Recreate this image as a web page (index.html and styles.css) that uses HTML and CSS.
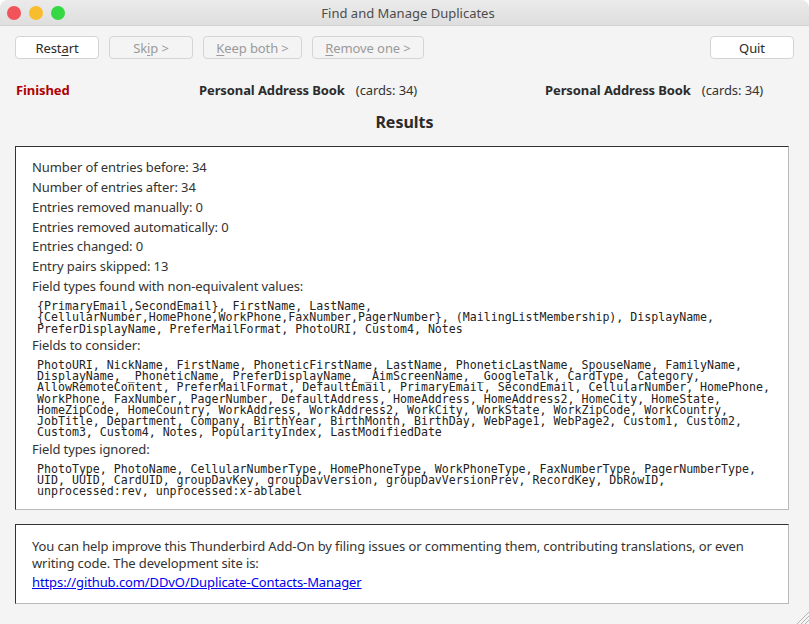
FILE: index.html
```html
<!DOCTYPE html>
<html>
<head>
<meta charset="utf-8">
<title>Find and Manage Duplicates</title>
<link rel="stylesheet" href="styles.css">
</head>
<body>
<div class="window">
  <div class="titlebar">
    <div class="lights">
      <span class="light red"></span>
      <span class="light yellow"></span>
      <span class="light green"></span>
    </div>
    <div class="title">Find and Manage Duplicates</div>
  </div>
  <div class="toolbar">
    <div class="btn-group">
      <button class="btn w-restart">Rest<u>a</u>rt</button>
      <button class="btn disabled w-skip">Sk<u>i</u>p &gt;</button>
      <button class="btn disabled w-keep"><u>K</u>eep both &gt;</button>
      <button class="btn disabled w-remove"><u>R</u>emove one &gt;</button>
    </div>
    <button class="btn w-quit">Quit</button>
  </div>
  <div class="status-row">
    <div class="status">Finished</div>
    <div class="book"><b>Personal Address Book</b><span class="cards">(cards: 34)</span></div>
    <div class="book"><b>Personal Address Book</b><span class="cards">(cards: 34)</span></div>
  </div>
  <h1 class="heading">Results</h1>
  <div class="panel results">
    <div class="line">Number of entries before: 34</div>
    <div class="line">Number of entries after: 34</div>
    <div class="line">Entries removed manually: 0</div>
    <div class="line">Entries removed automatically: 0</div>
    <div class="line">Entries changed: 0</div>
    <div class="line">Entry pairs skipped: 13</div>
    <div class="line">Field types found with non-equivalent values:</div>
    <div class="mono">{PrimaryEmail,SecondEmail}, FirstName, LastName,
{CellularNumber,HomePhone,WorkPhone,FaxNumber,PagerNumber}, (MailingListMembership), DisplayName,
PreferDisplayName, PreferMailFormat, PhotoURI, Custom4, Notes</div>
    <div class="line">Fields to consider:</div>
    <div class="mono">PhotoURI, NickName, FirstName, PhoneticFirstName, LastName, PhoneticLastName, SpouseName, FamilyName,
DisplayName, _PhoneticName, PreferDisplayName, _AimScreenName, _GoogleTalk, CardType, Category,
AllowRemoteContent, PreferMailFormat, DefaultEmail, PrimaryEmail, SecondEmail, CellularNumber, HomePhone,
WorkPhone, FaxNumber, PagerNumber, DefaultAddress, HomeAddress, HomeAddress2, HomeCity, HomeState,
HomeZipCode, HomeCountry, WorkAddress, WorkAddress2, WorkCity, WorkState, WorkZipCode, WorkCountry,
JobTitle, Department, Company, BirthYear, BirthMonth, BirthDay, WebPage1, WebPage2, Custom1, Custom2,
Custom3, Custom4, Notes, PopularityIndex, LastModifiedDate</div>
    <div class="line">Field types ignored:</div>
    <div class="mono">PhotoType, PhotoName, CellularNumberType, HomePhoneType, WorkPhoneType, FaxNumberType, PagerNumberType,
UID, UUID, CardUID, groupDavKey, groupDavVersion, groupDavVersionPrev, RecordKey, DbRowID,
unprocessed:rev, unprocessed:x-ablabel</div>
  </div>
  <div class="panel about">
    <p class="about-text">You can help improve this Thunderbird Add-On by filing issues or commenting them, contributing translations, or even writing code. The development site is:</p>
    <a class="about-link" href="#">https://github.com/DDvO/Duplicate-Contacts-Manager</a>
  </div>
  <svg class="grip" width="14" height="14" viewBox="0 0 14 14">
    <path d="M14 2 L2 14 M14 6 L6 14 M14 10 L10 14" stroke="#b5b5b5" stroke-width="1"/>
  </svg>
</div>
</body>
</html>
```

FILE: styles.css
```css
html, body {
  margin: 0;
  padding: 0;
  background: #ffffff;
}
body {
  font-family: "Noto Sans", "DejaVu Sans", sans-serif;
  font-size: 13px;
  letter-spacing: -0.1px;
  color: #333333;
}
.window {
  position: relative;
  width: 809px;
  height: 624px;
  background: #f4f4f4;
  border-radius: 8px 8px 0 0;
  overflow: hidden;
  display: flex;
  flex-direction: column;
}
.titlebar {
  height: 26px;
  background: linear-gradient(#ebebeb, #dedede);
  border-bottom: 1px solid #d2d2d2;
  box-sizing: border-box;
  display: flex;
  align-items: center;
  position: relative;
}
.lights {
  display: flex;
  gap: 8px;
  padding-left: 7px;
}
.light {
  width: 14px;
  height: 14px;
  border-radius: 50%;
  display: block;
}
.red { background: #f2525a; }
.yellow { background: #f8bd2e; }
.green { background: #33d843; }
.title {
  flex: 1;
  text-align: center;
  color: #4c4c4c;
  font-size: 13px;
  letter-spacing: 0;
  margin-left: -58px;
}
.toolbar {
  display: flex;
  justify-content: space-between;
  padding: 10px 15px 0 15px;
}
.btn-group {
  display: flex;
  gap: 10px;
}
.btn {
  height: 23px;
  box-sizing: border-box;
  border: 1px solid #d4d4d4;
  border-radius: 4px;
  background: #ffffff;
  font-family: inherit;
  font-size: 13px;
  letter-spacing: -0.1px;
  color: #2b2b2b;
  padding: 0;
  margin: 0;
}
.btn.disabled {
  background: #f4f4f4;
  color: #9a9a9a;
}
.btn u { text-underline-offset: 2px; }
.w-restart { width: 84px; }
.w-skip { width: 84px; }
.w-keep { width: 99px; }
.w-remove { width: 112px; }
.w-quit { width: 84px; }
.status-row {
  display: grid;
  grid-template-columns: 183px 346px 1fr;
  padding: 21px 0 0 16px;
  height: 20px;
  line-height: 20px;
}
.status {
  color: #b00000;
  font-weight: bold;
}
.book b {
  color: #2b2b2b;
}
.cards {
  margin-left: 11px;
}
.heading {
  margin: 12px 0 0 0;
  text-align: center;
  font-size: 16px;
  font-weight: bold;
  line-height: 20px;
  letter-spacing: 0;
  color: #2b2b2b;
}
.panel {
  margin: 14px 20px 0 15px;
  background: #ffffff;
  border-top: 1px solid #333333;
  border-left: 1px solid #333333;
  border-right: 1px solid #b9b9b9;
  border-bottom: 1px solid #b9b9b9;
}
.results {
  padding: 11px 16px 11px 16px;
}
.line {
  line-height: 19.85px;
}
.mono {
  font-family: "DejaVu Sans Mono", monospace;
  font-size: 11.6px;
  letter-spacing: 0;
  line-height: 11.3px;
  white-space: pre;
  color: #222222;
  padding-left: 5px;
  margin: 4px 0 1px 0;
}
.about {
  padding: 13px 16px 12px 16px;
}
.about-text {
  margin: 0;
  line-height: 17px;
}
.about-link {
  display: inline-block;
  margin-top: 2px;
  line-height: 17px;
  color: #0000ee;
}
.grip {
  position: absolute;
  right: 0;
  bottom: 0;
}
```
